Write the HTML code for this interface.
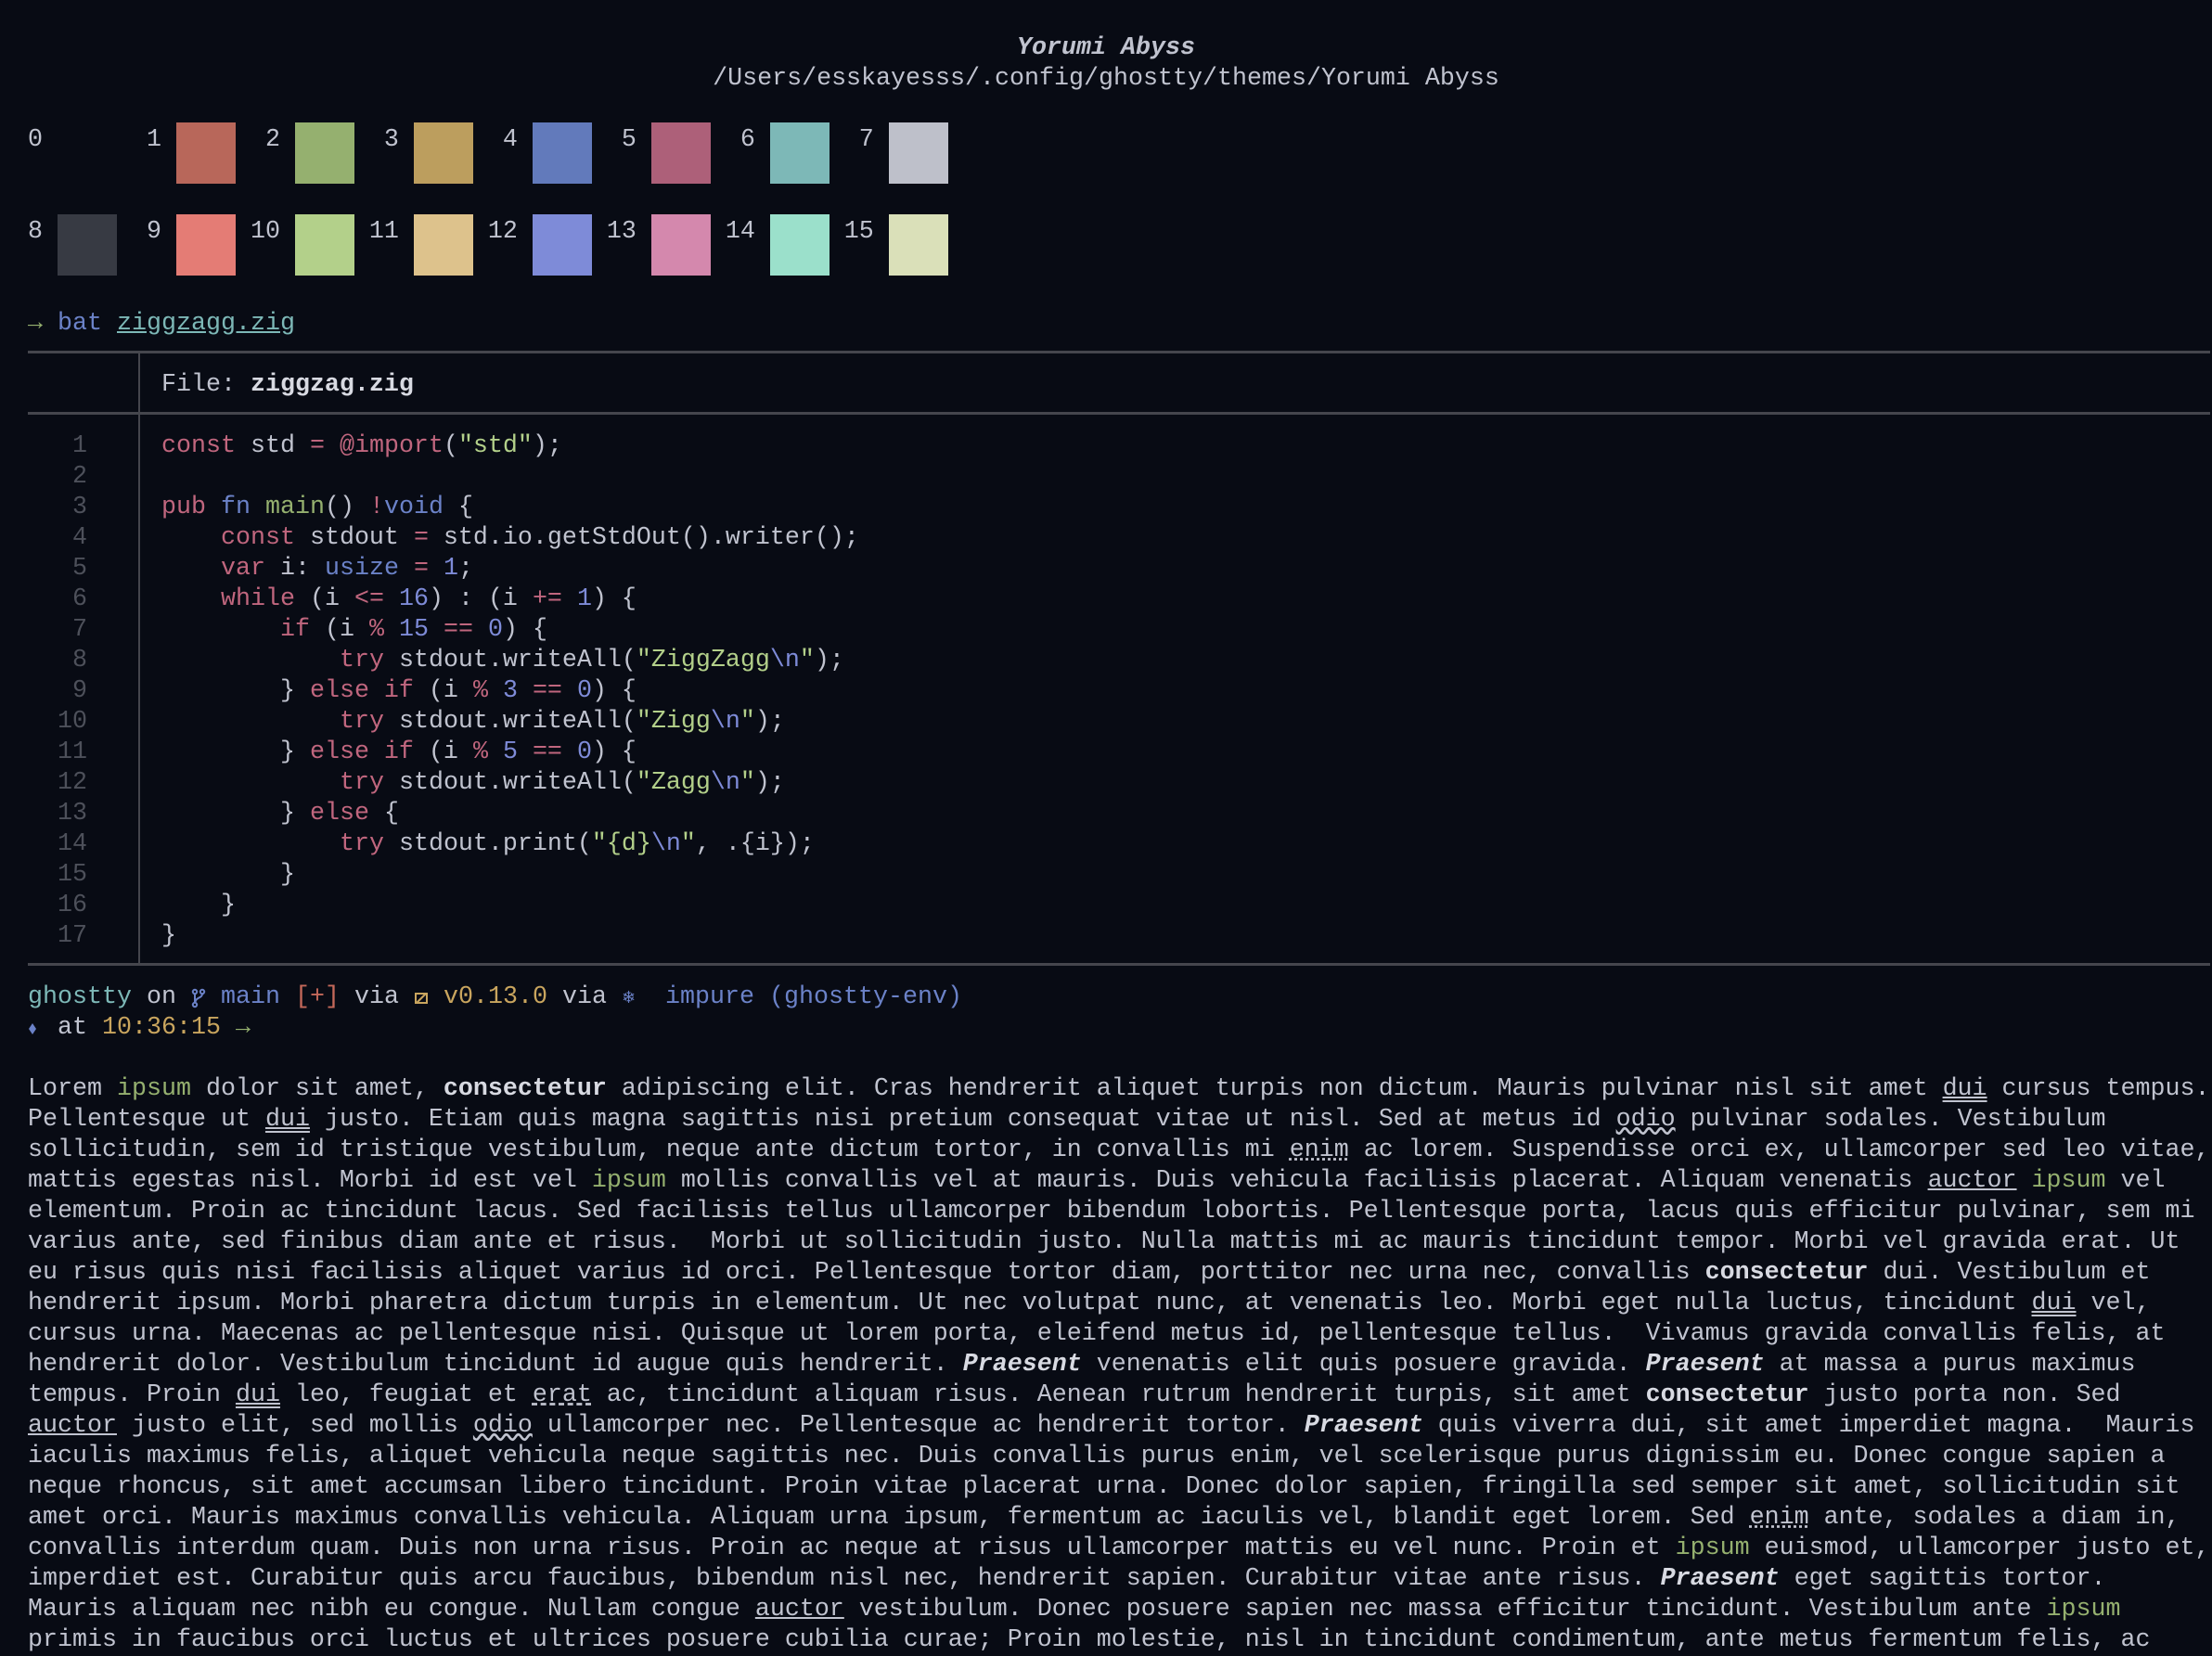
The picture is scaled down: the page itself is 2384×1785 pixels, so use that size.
<!DOCTYPE html>
<html><head><meta charset="utf-8">
<style>
html,body{margin:0;padding:0;background:#080b14;}
body{width:2384px;height:1782px;position:relative;overflow:hidden;color:#c0c3cf;
font-family:"Liberation Mono","DejaVu Sans Mono",monospace;font-size:26.67px;}
.r{position:absolute;left:30px;height:33px;line-height:33px;white-space:pre;transform:translateY(3px);}
.c{left:0;width:2384px;text-align:center;}
.sw{position:absolute;width:64px;height:66px;}
.hl{position:absolute;left:30px;width:2352px;height:3px;background:#45464d;}
.vl{position:absolute;left:149px;width:2px;background:#45464d;}
.k{color:#c0667e}.b{color:#6b82c8}.n{color:#7e8bd8}.s{color:#b3d08a}.g{color:#95b06f}
.t{color:#7db8b7}.y{color:#c9a55e}.red{color:#c4685a}.ln{color:#4d505a}
.bo{font-weight:bold;color:#d8dae2}.bi{font-weight:bold;font-style:italic;color:#d8dae2}
.u1{text-decoration:underline}.u2{text-decoration:underline double}
.uw{text-decoration:underline wavy}.ud{text-decoration:underline dotted}.ux{text-decoration:underline dashed}
.ic{display:inline-block;width:16px;height:33px;vertical-align:top;position:relative}
</style></head><body>
<div class="r c bi" style="top:33px;color:#c0c3cf">Yorumi Abyss</div>
<div class="r c" style="top:66px">/Users/esskayesss/.config/ghostty/themes/Yorumi Abyss</div>

<div class="r" style="top:132px">0       1       2       3       4       5       6       7</div>
<div class="r" style="top:231px">8       9      10      11      12      13      14      15</div>
<div class="sw" style="left:190px;top:132px;background:#b8675a"></div>
<div class="sw" style="left:318px;top:132px;background:#95b06f"></div>
<div class="sw" style="left:446px;top:132px;background:#bc9e5e"></div>
<div class="sw" style="left:574px;top:132px;background:#627abb"></div>
<div class="sw" style="left:702px;top:132px;background:#ad6079"></div>
<div class="sw" style="left:830px;top:132px;background:#7db8b7"></div>
<div class="sw" style="left:958px;top:132px;background:#bec0ca"></div>
<div class="sw" style="left:62px;top:231px;background:#373a43"></div>
<div class="sw" style="left:190px;top:231px;background:#e47c75"></div>
<div class="sw" style="left:318px;top:231px;background:#b3d08a"></div>
<div class="sw" style="left:446px;top:231px;background:#ddc28c"></div>
<div class="sw" style="left:574px;top:231px;background:#7e8bd8"></div>
<div class="sw" style="left:702px;top:231px;background:#d488ad"></div>
<div class="sw" style="left:830px;top:231px;background:#9be0cb"></div>
<div class="sw" style="left:958px;top:231px;background:#dae0b9"></div>

<div class="r" style="top:330px"><span class="g">→</span> <span class="b">bat</span> <span class="t u1">ziggzagg.zig</span></div>
<div class="hl" style="top:378px"></div>
<div class="vl" style="top:378px;height:663px"></div>
<div class="r" style="top:396px">         File: <span class="bo">ziggzag.zig</span></div>
<div class="hl" style="top:444px"></div>
<div class="r" style="top:462px"><span class="ln">   1</span>     <span class="k">const</span> std <span class="k">=</span> <span class="k">@import</span>(<span class="s">"std"</span>);</div>
<div class="r" style="top:495px"><span class="ln">   2</span></div>
<div class="r" style="top:528px"><span class="ln">   3</span>     <span class="k">pub</span> <span class="b">fn</span> <span class="g">main</span>() <span class="k">!</span><span class="b">void</span> {</div>
<div class="r" style="top:561px"><span class="ln">   4</span>         <span class="k">const</span> stdout <span class="k">=</span> std.io.getStdOut().writer();</div>
<div class="r" style="top:594px"><span class="ln">   5</span>         <span class="k">var</span> i: <span class="b">usize</span> <span class="k">=</span> <span class="n">1</span>;</div>
<div class="r" style="top:627px"><span class="ln">   6</span>         <span class="k">while</span> (i <span class="k">&lt;=</span> <span class="n">16</span>) : (i <span class="k">+=</span> <span class="n">1</span>) {</div>
<div class="r" style="top:660px"><span class="ln">   7</span>             <span class="k">if</span> (i <span class="k">%</span> <span class="n">15</span> <span class="k">==</span> <span class="n">0</span>) {</div>
<div class="r" style="top:693px"><span class="ln">   8</span>                 <span class="k">try</span> stdout.writeAll(<span class="s">"ZiggZagg</span><span class="n">\n</span><span class="s">"</span>);</div>
<div class="r" style="top:726px"><span class="ln">   9</span>             } <span class="k">else if</span> (i <span class="k">%</span> <span class="n">3</span> <span class="k">==</span> <span class="n">0</span>) {</div>
<div class="r" style="top:759px"><span class="ln">  10</span>                 <span class="k">try</span> stdout.writeAll(<span class="s">"Zigg</span><span class="n">\n</span><span class="s">"</span>);</div>
<div class="r" style="top:792px"><span class="ln">  11</span>             } <span class="k">else if</span> (i <span class="k">%</span> <span class="n">5</span> <span class="k">==</span> <span class="n">0</span>) {</div>
<div class="r" style="top:825px"><span class="ln">  12</span>                 <span class="k">try</span> stdout.writeAll(<span class="s">"Zagg</span><span class="n">\n</span><span class="s">"</span>);</div>
<div class="r" style="top:858px"><span class="ln">  13</span>             } <span class="k">else</span> {</div>
<div class="r" style="top:891px"><span class="ln">  14</span>                 <span class="k">try</span> stdout.print(<span class="s">"{d}</span><span class="n">\n</span><span class="s">"</span>, .{i});</div>
<div class="r" style="top:924px"><span class="ln">  15</span>             }</div>
<div class="r" style="top:957px"><span class="ln">  16</span>         }</div>
<div class="r" style="top:990px"><span class="ln">  17</span>     }</div>
<div class="hl" style="top:1038px"></div>

<div class="r" style="top:1056px"><span class="t">ghostty</span> on <span class="ic"><svg width="16" height="33" viewBox="0 0 16 33"><g fill="none" stroke="#6b82c8" stroke-width="2"><circle cx="4" cy="10" r="2.2"/><circle cx="12" cy="10" r="2.2"/><circle cx="4" cy="24" r="2.2"/><path d="M4 12.2V21.8M12 12.2C12 17 5 16 4.5 21"/></g></svg></span> <span class="b">main</span> <span class="red">[+]</span> via <span class="ic"><svg width="16" height="33" viewBox="0 0 16 33"><g fill="none" stroke="#c9a55e" stroke-width="2"><path d="M2 12H14V22H2Z"/><path d="M3 22L13 12"/></g></svg></span> <span class="y">v0.13.0</span> via <span class="b" style="font-family:'DejaVu Sans',sans-serif;font-size:18px">❄</span>  <span class="b">impure (ghostty-env)</span></div>
<div class="r" style="top:1089px"><span class="ic"><svg width="16" height="33" viewBox="0 0 16 33"><path d="M5 11L9 17L5 23L1 17Z" fill="#6b82c8"/></svg></span> at <span class="y">10:36:15</span> <span class="g">→</span></div>

<div class="r" style="top:1155px">Lorem <span class="g">ipsum</span> dolor sit amet, <span class="bo">consectetur</span> adipiscing elit. Cras hendrerit aliquet turpis non dictum. Mauris pulvinar nisl sit amet <span class="u2">dui</span> cursus tempus.</div>
<div class="r" style="top:1188px">Pellentesque ut <span class="u2">dui</span> justo. Etiam quis magna sagittis nisi pretium consequat vitae ut nisl. Sed at metus id <span class="uw">odio</span> pulvinar sodales. Vestibulum</div>
<div class="r" style="top:1221px">sollicitudin, sem id tristique vestibulum, neque ante dictum tortor, in convallis mi <span class="ud">enim</span> ac lorem. Suspendisse orci ex, ullamcorper sed leo vitae,</div>
<div class="r" style="top:1254px">mattis egestas nisl. Morbi id est vel <span class="g">ipsum</span> mollis convallis vel at mauris. Duis vehicula facilisis placerat. Aliquam venenatis <span class="u1">auctor</span> <span class="g">ipsum</span> vel</div>
<div class="r" style="top:1287px">elementum. Proin ac tincidunt lacus. Sed facilisis tellus ullamcorper bibendum lobortis. Pellentesque porta, lacus quis efficitur pulvinar, sem mi</div>
<div class="r" style="top:1320px">varius ante, sed finibus diam ante et risus.  Morbi ut sollicitudin justo. Nulla mattis mi ac mauris tincidunt tempor. Morbi vel gravida erat. Ut</div>
<div class="r" style="top:1353px">eu risus quis nisi facilisis aliquet varius id orci. Pellentesque tortor diam, porttitor nec urna nec, convallis <span class="bo">consectetur</span> dui. Vestibulum et</div>
<div class="r" style="top:1386px">hendrerit ipsum. Morbi pharetra dictum turpis in elementum. Ut nec volutpat nunc, at venenatis leo. Morbi eget nulla luctus, tincidunt <span class="u2">dui</span> vel,</div>
<div class="r" style="top:1419px">cursus urna. Maecenas ac pellentesque nisi. Quisque ut lorem porta, eleifend metus id, pellentesque tellus.  Vivamus gravida convallis felis, at</div>
<div class="r" style="top:1452px">hendrerit dolor. Vestibulum tincidunt id augue quis hendrerit. <span class="bi">Praesent</span> venenatis elit quis posuere gravida. <span class="bi">Praesent</span> at massa a purus maximus</div>
<div class="r" style="top:1485px">tempus. Proin <span class="u2">dui</span> leo, feugiat et <span class="ux">erat</span> ac, tincidunt aliquam risus. Aenean rutrum hendrerit turpis, sit amet <span class="bo">consectetur</span> justo porta non. Sed</div>
<div class="r" style="top:1518px"><span class="u1">auctor</span> justo elit, sed mollis <span class="uw">odio</span> ullamcorper nec. Pellentesque ac hendrerit tortor. <span class="bi">Praesent</span> quis viverra dui, sit amet imperdiet magna.  Mauris</div>
<div class="r" style="top:1551px">iaculis maximus felis, aliquet vehicula neque sagittis nec. Duis convallis purus enim, vel scelerisque purus dignissim eu. Donec congue sapien a</div>
<div class="r" style="top:1584px">neque rhoncus, sit amet accumsan libero tincidunt. Proin vitae placerat urna. Donec dolor sapien, fringilla sed semper sit amet, sollicitudin sit</div>
<div class="r" style="top:1617px">amet orci. Mauris maximus convallis vehicula. Aliquam urna ipsum, fermentum ac iaculis vel, blandit eget lorem. Sed <span class="ud">enim</span> ante, sodales a diam in,</div>
<div class="r" style="top:1650px">convallis interdum quam. Duis non urna risus. Proin ac neque at risus ullamcorper mattis eu vel nunc. Proin et <span class="g">ipsum</span> euismod, ullamcorper justo et,</div>
<div class="r" style="top:1683px">imperdiet est. Curabitur quis arcu faucibus, bibendum nisl nec, hendrerit sapien. Curabitur vitae ante risus. <span class="bi">Praesent</span> eget sagittis tortor.</div>
<div class="r" style="top:1716px">Mauris aliquam nec nibh eu congue. Nullam congue <span class="u1">auctor</span> vestibulum. Donec posuere sapien nec massa efficitur tincidunt. Vestibulum ante <span class="g">ipsum</span></div>
<div class="r" style="top:1749px">primis in faucibus orci luctus et ultrices posuere cubilia curae; Proin molestie, nisl in tincidunt condimentum, ante metus fermentum felis, ac</div>
</body></html>
